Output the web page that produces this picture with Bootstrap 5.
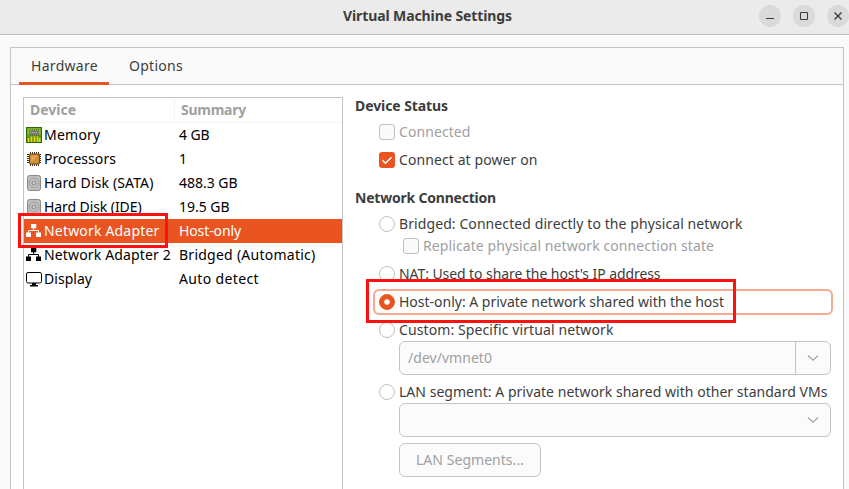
<!DOCTYPE html>
<html lang="en">
<head>
<meta charset="utf-8">
<meta name="viewport" content="width=device-width, initial-scale=1">
<title>Virtual Machine Settings</title>
<link href="https://cdn.jsdelivr.net/npm/bootstrap@5.3.0/dist/css/bootstrap.min.css" rel="stylesheet">
<style>
  :root { --accent: #e95420; --line: #c4c4c4; --ink: #3d3d3d; --muted: #a0a0a0; }
  html, body { height: 489px; overflow: hidden; }
  body { font: 14px/20px "Noto Sans", "Open Sans", sans-serif; color: var(--ink); background: #fafafa; }
  [data-w] { display: inline-block; white-space: pre; flex: none; }
  .titlebar { height: 35px; background: #ebebeb; border-bottom: 1px solid #bdbdbd; }
  .titlebar h1 { font-size: 14px; line-height: 20px; padding-left: 343px; padding-top: 6px; }
  .win-btns { gap: 12px; padding-top: 5px; }
  .win-btn { width: 22px; height: 22px; background: #dadada; flex: none; }
  .panel { margin: 12px 5px 0 10px; height: 460px; border: 1px solid var(--line); background: #fff; }
  .tabs { height: 37px; background: #fafafa; border-bottom: 1px solid var(--line); padding-left: 8px; gap: 8px; }
  .tabs .nav-link { color: var(--ink); height: 37px; padding: 8px 12px 0; border-radius: 0; }
  .tabs .nav-link.active { border-bottom: 3px solid var(--accent); width: 90px; }
  .devices { margin: 12px 0 0 12px; width: 320px; height: 410px; border: 1px solid var(--line); color: #000; flex: none; }
  .head { height: 25px; border-bottom: 1px solid #f4f4f4; color: var(--muted); }
  .head > :first-child { width: 151px; padding-left: 6px; border-right: 1px solid #f4f4f4; }
  .head > :last-child { padding-left: 6px; }
  .dev { height: 24px; }
  .dev > :first-child { width: 155px; padding-left: 2px; }
  .dev svg { width: 16px; height: 16px; margin-right: 2px; flex: none; display: block; }
  .dev.on { background: var(--accent); color: #fff; }
  .options { padding: 11px 11px 0 12px; width: 489px; }
  .options h2 { font-size: 14px; line-height: 20px; margin: 0; }
  .options h2.second { margin-top: 17px; }
  .opt { height: 22px; padding-left: 24px; gap: 4px; }
  .opt.first { margin-top: 5px; }
  .opt.spaced { margin-top: 6px; }
  .opt.sub { padding-left: 48px; }
  .opt.off, .off { color: var(--muted); }
  .opt .form-check-input { width: 16px; height: 16px; margin: 0; border: 1px solid #c0c0c0; flex: none; background-color: #fff; opacity: 1; }
  .opt .form-check-input[type=checkbox] { border-radius: 3px; background-color: #fafafa; }
  .opt .form-check-input:checked { background: var(--accent); border-color: var(--accent); background-image: none; }
  .tick { display: block; width: 16px; height: 16px; border-radius: 3px; background: var(--accent); flex: none; }
  .opt .form-check-input[type=radio]:checked { background: radial-gradient(circle, #fff 2.4px, var(--accent) 3.1px); }
  .focused { margin: 4px -12px 0 18px; padding: 0 0 0 4px; height: 26px; border: 2px solid #f4aa90; border-radius: 6px; gap: 4px; }
  .box { height: 34px; border: 1px solid var(--line); border-radius: 6px; background: #fbfbfb; margin-left: 44px; width: 432px; }
  .box .arrow { width: 35px; height: 100%; }
  .box .split { border-left: 1px solid var(--line); }
  .lan-btn.btn { width: 142px; margin-top: 6px; padding: 0 0 0 16px; color: var(--muted); font-size: 14px; line-height: 20px; opacity: 1; background: #fbfbfb; border-color: var(--line); text-align: left; }
  .callout { position: absolute; border: 3px solid #fe1210; z-index: 5; }
  .callout-a { left: 18px; top: 213px; width: 150px; height: 35px; }
  .callout-b { left: 366px; top: 279px; width: 370px; height: 44px; }
</style>
<script src="https://cdn.jsdelivr.net/npm/bootstrap@5.3.0/dist/js/bootstrap.bundle.min.js"></script>
</head>
<body class="position-relative">
<svg class="d-none">
  <symbol id="disk" viewBox="0 0 16 16">
    <rect x="1.500" y=".5" width="13" height="15" rx="2" fill="#bdbdbd" stroke="#8a8a8a"/>
    <circle cx="8" cy="8" r="4.700" fill="#c6c6c6" stroke="#939393" stroke-width=".8"/>
    <circle cx="8" cy="8" r="2.200" fill="#b4b4b4" stroke="#858585" stroke-width=".8"/>
    <circle cx="8" cy="8" r=".7" fill="#eee"/>
  </symbol>
  <symbol id="net" viewBox="0 0 16 16">
    <path d="M5 1h5.300v4.300H5zM0 9.600h5V14H0zM10 9.600h5V14h-5z" fill="currentColor"/>
    <path d="M7.600 5v2.500M2.500 10V7.500h10V10" fill="none" stroke="currentColor"/>
  </symbol>
  <symbol id="down" viewBox="0 0 12 8"><path d="M1 1.500 6 6.200l5-4.700" fill="none" stroke="#a0a0a0" stroke-width="1.100"/></symbol>
</svg>

<header class="titlebar d-flex justify-content-between">
  <h1 class="fw-bold m-0"><span data-w="169">Virtual Machine Settings</span></h1>
  <div class="win-btns d-flex">
    <span class="win-btn rounded-circle"><svg class="d-block" width="22" height="22"><path d="M7 13.500h8" stroke="#3d3d3d"/></svg></span>
    <span class="win-btn rounded-circle"><svg class="d-block" width="22" height="22"><path d="M7.500 7.500h7v7h-7z" fill="none" stroke="#3d3d3d"/></svg></span>
    <span class="win-btn rounded-circle"><svg class="d-block" width="22" height="22"><path d="m7.500 7.500 7 7m0-7-7 7" stroke="#3d3d3d" stroke-width="1.400"/></svg></span>
  </div>
</header>

<main class="panel">
  <nav class="tabs nav flex-nowrap">
    <a class="nav-link active"><span data-w="67">Hardware</span></a>
    <a class="nav-link"><span data-w="54">Options</span></a>
  </nav>
  <div class="d-flex">
    <section class="devices">
      <div class="head d-flex align-items-center fw-bold">
        <div><span data-w="46">Device</span></div><div><span data-w="65">Summary</span></div>
      </div>
      <div class="dev d-flex align-items-center">
        <div class="d-flex align-items-center">
          <svg viewBox="0 0 16 16"><rect x=".5" y=".5" width="15" height="15" fill="#5f9f12" stroke="#2f6705"/><path d="M1.500 1.500h13v6h-13z" fill="#84c61f"/><path d="M4 3h9M4 8h9" stroke="#454545" stroke-dasharray="1 1"/><rect x="3" y="3.500" width="10" height="4" rx="1" fill="#777"/><path d="M4 5.500h8" stroke="#bbb" stroke-dasharray="1 1"/><path d="M2.500 11v4M5.500 9.500V15M8.500 9.500V15M11.500 9.500V15M13.700 11v4" stroke="#f3d315" stroke-width="1.500"/></svg>
          <span data-w="56.500">Memory</span></div>
        <span data-w="30.500">4 GB</span>
      </div>
      <div class="dev d-flex align-items-center">
        <div class="d-flex align-items-center">
          <svg viewBox="0 0 16 16"><path d="M4.500 1v14M6.500 1v14M8.500 1v14M10.500 1v14M12.500 1v14M1 3.500h14M1 5.500h14M1 7.500h14M1 9.500h14M1 11.500h14" stroke="#383838"/><rect x="3.500" y="3" width="10" height="10" rx="1" fill="#c9852b" stroke="#7c480c"/><path d="M5 4.500h7v7H5z" fill="#e0a552"/><path d="m5 11.500 7-7v7z" fill="#d08f38"/></svg>
          <span data-w="72">Processors</span></div>
        <span>1</span>
      </div>
      <div class="dev d-flex align-items-center">
        <div class="d-flex align-items-center"><svg><use href="#disk"/></svg><span data-w="109.500">Hard Disk (SATA)</span></div>
        <span data-w="58.500">488.3 GB</span>
      </div>
      <div class="dev d-flex align-items-center">
        <div class="d-flex align-items-center"><svg><use href="#disk"/></svg><span data-w="97.500">Hard Disk (IDE)</span></div>
        <span data-w="50.500">19.5 GB</span>
      </div>
      <div class="dev on d-flex align-items-center">
        <div class="d-flex align-items-center"><svg><use href="#net"/></svg><span data-w="115.500">Network Adapter</span></div>
        <span data-w="62">Host-only</span>
      </div>
      <div class="dev d-flex align-items-center">
        <div class="d-flex align-items-center"><svg><use href="#net"/></svg><span data-w="127">Network Adapter 2</span></div>
        <span data-w="136.500">Bridged (Automatic)</span>
      </div>
      <div class="dev d-flex align-items-center">
        <div class="d-flex align-items-center">
          <svg viewBox="0 0 16 16"><rect x=".5" y="1.500" width="15" height="10.500" rx="1.600" fill="#fff" stroke="#000"/><path d="M6 12h4v2h2v1.500H4V14h2z"/></svg>
          <span data-w="48">Display</span></div>
        <span data-w="80">Auto detect</span>
      </div>
    </section>

    <section class="options">
      <h2 class="fw-bold"><span data-w="93">Device Status</span></h2>
      <div class="opt first off d-flex align-items-center"><input class="form-check-input" type="checkbox"><span data-w="71.500">Connected</span></div>
      <div class="opt spaced d-flex align-items-center"><svg class="tick" viewBox="0 0 16 16"><path d="m3.600 8.300 2.900 2.900 6-6" fill="none" stroke="#fff" stroke-width="1.500"/></svg><span data-w="138.500">Connect at power on</span></div>
      <h2 class="second fw-bold"><span data-w="141">Network Connection</span></h2>
      <div class="opt first d-flex align-items-center"><input class="form-check-input" type="radio"><span data-w="343.500">Bridged: Connected directly to the physical network</span></div>
      <div class="opt sub off d-flex align-items-center"><input class="form-check-input" type="checkbox"><span data-w="291">Replicate physical network connection state</span></div>
      <div class="opt spaced d-flex align-items-center"><input class="form-check-input" type="radio"><span data-w="261.500">NAT: Used to share the host's IP address</span></div>
      <div class="opt focused d-flex align-items-center"><input class="form-check-input" type="radio" checked><span data-w="325">Host-only: A private network shared with the host</span></div>
      <div class="opt d-flex align-items-center mt-1"><input class="form-check-input" type="radio"><span data-w="214.500">Custom: Specific virtual network</span></div>
      <div class="box off d-flex align-items-center justify-content-between">
        <span class="ps-2"><span data-w="84">/dev/vmnet0</span></span>
        <span class="arrow split d-flex align-items-center justify-content-center"><svg width="12" height="8"><use href="#down"/></svg></span>
      </div>
      <div class="opt spaced d-flex align-items-center"><input class="form-check-input" type="radio"><span data-w="428.500">LAN segment: A private network shared with other standard VMs</span></div>
      <div class="box d-flex align-items-center justify-content-end">
        <span class="arrow d-flex align-items-center justify-content-center"><svg width="12" height="8"><use href="#down"/></svg></span>
      </div>
      <button class="btn box lan-btn d-block" type="button" disabled><span data-w="108">LAN Segments...</span></button>
    </section>
  </div>
</main>
<div class="callout callout-a"></div>
<div class="callout callout-b"></div>
<script>
  // Track each label so it fills its designed width.
  document.querySelectorAll('[data-w]').forEach(el => {
    const gap = (parseFloat(el.dataset.w) - el.getBoundingClientRect().width) / el.textContent.length;
    el.style.letterSpacing = gap.toFixed(3) + 'px';
  });
</script>
</body>
</html>
